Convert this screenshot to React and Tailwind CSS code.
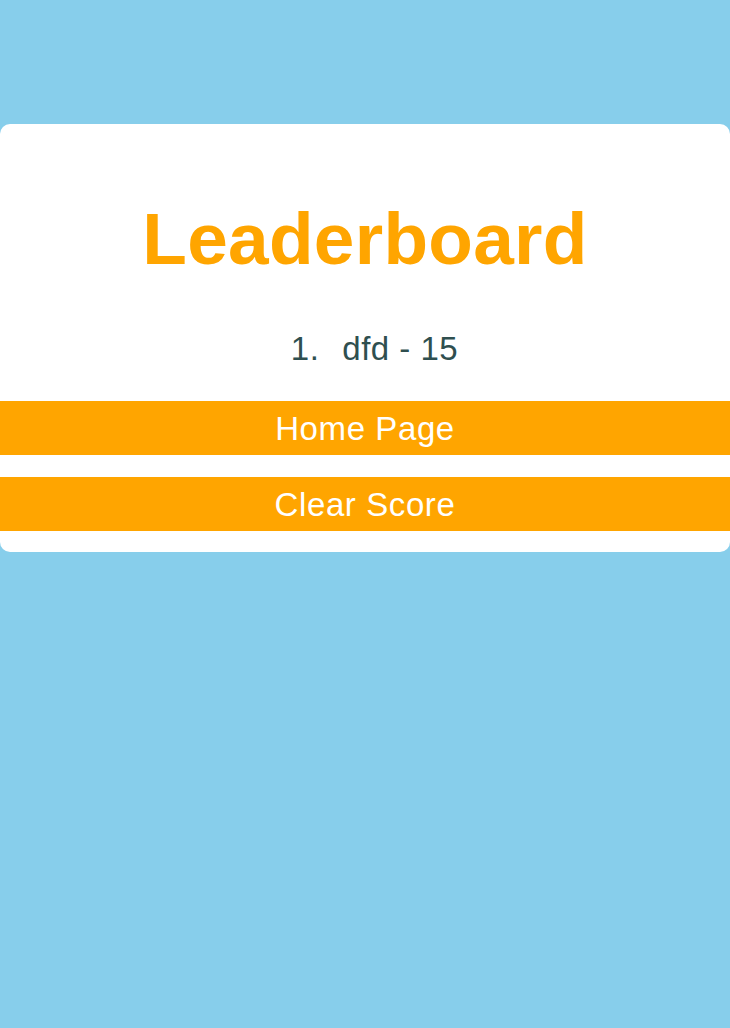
import React from 'react'

const scores = [{ name: 'dfd', score: 15 }]

export default function App() {
  return (
    <div className="min-h-screen bg-[#87CEEB] pt-[124px] font-['Liberation_Sans',Arial,sans-serif]">
      <div className="bg-white rounded-[10px] pt-[78px] pb-[21px]">
        <h1 className="text-center text-[73px] leading-none font-bold tracking-[0.3px] text-[#FFA500]">Leaderboard</h1>
        <ol className="mt-[57px] flex flex-col items-center">
          {scores.map((s, i) => (
            <li key={i} className="flex pl-[19px] text-[33px] leading-none tracking-[0.5px] text-[#2F4F4F]">
              <span className="mr-[23px]">{i + 1}.</span>
              <span>{s.name} - {s.score}</span>
            </li>
          ))}
        </ol>
        <div className="mt-[36px] flex flex-col gap-[22px]">
          <button className="h-[54px] w-full flex items-center justify-center bg-[#FFA500] text-white text-[33px] leading-none tracking-[0.6px]">
            Home Page
          </button>
          <button className="h-[54px] w-full flex items-center justify-center bg-[#FFA500] text-white text-[33px] leading-none tracking-[0.6px]">
            Clear Score
          </button>
        </div>
      </div>
    </div>
  )
}
